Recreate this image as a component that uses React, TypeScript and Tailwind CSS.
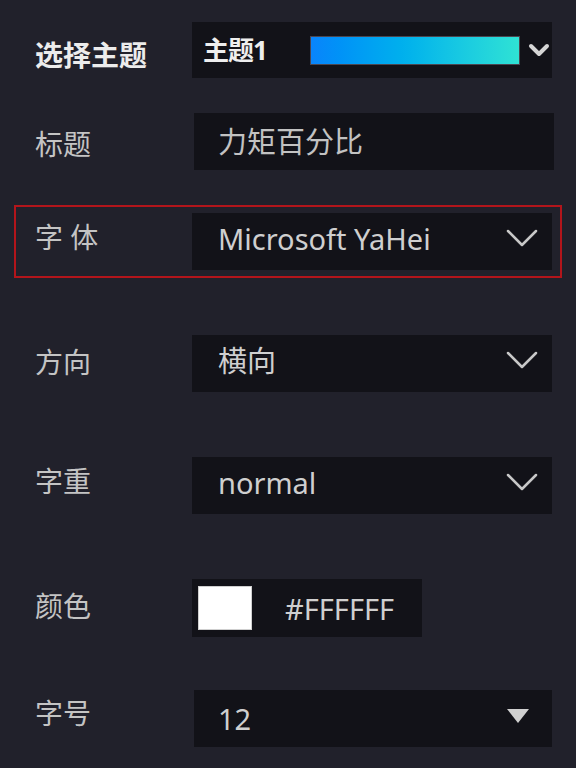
import React from "react";

const font = { fontFamily: '"Noto Sans", "Noto Sans CJK SC", sans-serif' };

const Chevron = ({ bold = false }: { bold?: boolean }) =>
  bold ? (
    <svg width="22" height="14" viewBox="0 0 22 14" className="shrink-0">
      <path d="M3 3 L11 11 L19 3" fill="none" stroke="#d6d6d6" strokeWidth="4" strokeLinecap="round" strokeLinejoin="round" />
    </svg>
  ) : (
    <svg width="32" height="18" viewBox="0 0 32 18" className="shrink-0">
      <path d="M2 2 L16 16 L30 2" fill="none" stroke="#c8c8c8" strokeWidth="2.5" strokeLinecap="round" strokeLinejoin="round" />
    </svg>
  );

const Label = ({
  children,
  bold = false,
  shift = "",
}: {
  children: React.ReactNode;
  bold?: boolean;
  shift?: string;
}) => (
  <div
    className={
      "w-[157px] shrink-0 text-[28px] leading-none " +
      (bold ? "font-bold text-[#ececec] " : "text-[#c4c4c4] ") +
      shift
    }
  >
    {children}
  </div>
);

const SelectBox = ({ value }: { value: string }) => (
  <div className="flex h-[57px] w-[360px] items-center justify-between bg-[#121218] pb-[7px] pl-[26px] pr-[14px]">
    <span className="text-[29px] leading-none text-[#cfcfcf]">{value}</span>
    <Chevron />
  </div>
);

export default function App() {
  return (
    <div className="min-h-[768px] w-[576px] bg-[#21212b] pb-[22px] pt-[22px]" style={font}>
      {/* 选择主题 */}
      <div className="ml-[35px] flex items-center">
        <Label bold shift="pt-[10px]">选择主题</Label>
        <div className="flex h-[56px] w-[360px] items-center bg-[#121218] pl-[11px] pr-[2px]">
          <span className="w-[107px] text-[26px] font-bold leading-none tracking-[-1px] text-[#eeeeee]">主题1</span>
          <div className="h-[29px] w-[210px] border border-[#4b4650] bg-gradient-to-r from-[#0a84fb] to-[#2fe2d4]" />
          <div className="ml-[8px]">
            <Chevron bold />
          </div>
        </div>
      </div>

      {/* 标题 */}
      <div className="ml-[35px] mt-[35px] flex items-center">
        <Label shift="pt-[4px]">标题</Label>
        <div className="ml-[2px] flex h-[57px] w-[360px] items-center bg-[#121218] pl-[24px]">
          <span className="text-[29px] leading-none text-[#c2c2c2]">力矩百分比</span>
        </div>
      </div>

      {/* 字体 (highlighted) */}
      <div className="mx-[14px] mt-[35px] border-2 border-[#b3151b] py-[6px] pl-[19px]">
        <div className="flex items-center">
          <Label shift="pb-[10px]">字 体</Label>
          <SelectBox value="Microsoft YaHei" />
        </div>
      </div>

      {/* 方向 */}
      <div className="ml-[35px] mt-[57px] flex items-center">
        <Label shift="pb-[4px]">方向</Label>
        <SelectBox value="横向" />
      </div>

      {/* 字重 */}
      <div className="ml-[35px] mt-[65px] flex items-center">
        <Label shift="pb-[10px]">字重</Label>
        <SelectBox value="normal" />
      </div>

      {/* 颜色 */}
      <div className="ml-[35px] mt-[65px] flex items-center">
        <Label shift="pb-[4px]">颜色</Label>
        <div className="flex h-[58px] w-[230px] items-center bg-[#121218] pl-[6px]">
          <div className="h-[44px] w-[54px] border border-[#cfcfcf] bg-white" />
          <span className="ml-[33px] text-[29px] leading-none text-[#cfcfcf]">#FFFFFF</span>
        </div>
      </div>

      {/* 字号 */}
      <div className="ml-[35px] mt-[53px] flex items-center">
        <Label shift="pb-[12px]">字号</Label>
        <div className="ml-[2px] flex h-[57px] w-[358px] items-center justify-between bg-[#121218] pl-[24px] pr-[22px]">
          <span className="text-[29px] leading-none text-[#cfcfcf]">12</span>
          <svg width="24" height="16" viewBox="0 0 24 16" className="mb-[6px]">
            <path d="M1 1 L23 1 L12 15 Z" fill="#d0d0d0" />
          </svg>
        </div>
      </div>
    </div>
  );
}
